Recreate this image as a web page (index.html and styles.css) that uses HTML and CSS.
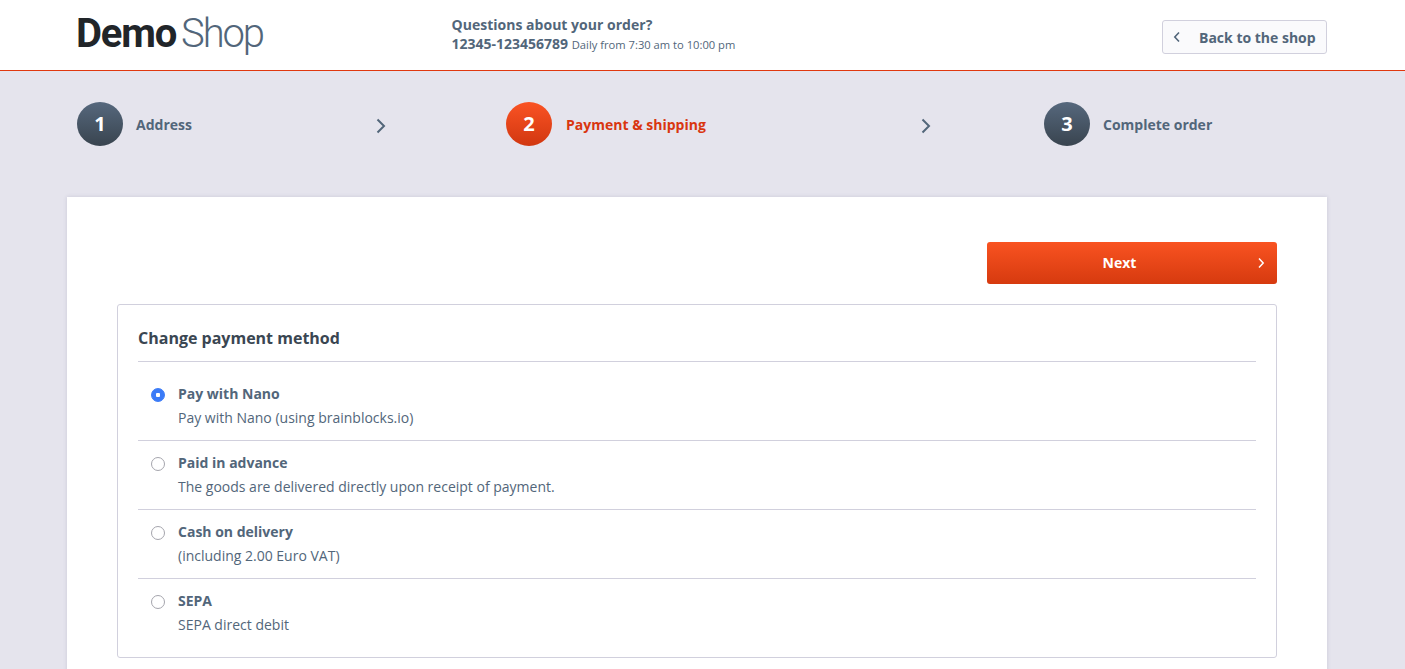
FILE: index.html
```html
<!DOCTYPE html>
<html lang="en">
<head>
  <meta charset="UTF-8">
  <meta name="viewport" content="width=device-width, initial-scale=1.0">
  <title>Demo Shop - Checkout</title>
  <link rel="stylesheet" href="styles.css">
</head>
<body>
  <header class="header">
    <div class="logo"><span class="logo-demo">Demo</span><span class="logo-shop">Shop</span></div>
    <div class="support">
      <div class="support-title">Questions about your order?</div>
      <div class="support-phone">12345-123456789 <span class="support-hours">Daily from 7:30 am to 10:00 pm</span></div>
    </div>
    <a class="back-button" href="#">
      <svg class="back-icon" width="8" height="12" viewBox="0 0 8 12"><path d="M6 1.500 1.800 6 6 10.500" fill="none" stroke="#52667a" stroke-width="1.600"/></svg>
      Back to the shop
    </a>
  </header>

  <nav class="steps">
    <div class="step step-first">
      <span class="step-number">1</span>
      <span class="step-label">Address</span>
      <svg class="step-arrow" width="10" height="16" viewBox="0 0 10 16"><path d="M1.500 1.500 8 8l-6.500 6.500" fill="none" stroke="#52667a" stroke-width="2"/></svg>
    </div>
    <div class="step step-second is-active">
      <span class="step-number">2</span>
      <span class="step-label">Payment &amp; shipping</span>
      <svg class="step-arrow" width="10" height="16" viewBox="0 0 10 16"><path d="M1.500 1.500 8 8l-6.500 6.500" fill="none" stroke="#52667a" stroke-width="2"/></svg>
    </div>
    <div class="step">
      <span class="step-number">3</span>
      <span class="step-label">Complete order</span>
    </div>
  </nav>

  <main class="card">
    <div class="actions">
      <button class="next-button" type="button">
        Next
        <svg class="next-icon" width="8" height="12" viewBox="0 0 8 12"><path d="M2 1.500 6.200 6 2 10.500" fill="none" stroke="#fff" stroke-width="1.500"/></svg>
      </button>
    </div>

    <section class="panel">
      <h2 class="panel-title">Change payment method</h2>
      <ul class="methods">
        <li class="method">
          <span class="radio is-checked"></span>
          <div>
            <div class="method-name">Pay with Nano</div>
            <div class="method-text">Pay with Nano (using brainblocks.io)</div>
          </div>
        </li>
        <li class="method">
          <span class="radio"></span>
          <div>
            <div class="method-name">Paid in advance</div>
            <div class="method-text">The goods are delivered directly upon receipt of payment.</div>
          </div>
        </li>
        <li class="method">
          <span class="radio"></span>
          <div>
            <div class="method-name">Cash on delivery</div>
            <div class="method-text">(including 2.00 Euro VAT)</div>
          </div>
        </li>
        <li class="method">
          <span class="radio"></span>
          <div>
            <div class="method-name">SEPA</div>
            <div class="method-text">SEPA direct debit</div>
          </div>
        </li>
      </ul>
    </section>
  </main>
</body>
</html>
```

FILE: styles.css
```css
html, body {
  height: 100%;
  overflow: hidden;
}
body {
  margin: 0;
  font-family: "Open Sans", sans-serif;
  font-size: 14px;
  color: #52667a;
  background-color: #e5e4ed;
}

/* header */
.header {
  display: flex;
  align-items: center;
  height: 70px;
  padding: 0 78px 0 76px;
  background-color: #fff;
  border-bottom: 1px solid #e0380f;
}
.logo {
  display: flex;
  width: 375.500px;
  margin-top: -3px;
  font-family: "Roboto", sans-serif;
  font-size: 40px;
  line-height: 44px;
}
.logo-demo {
  font-weight: 700;
  letter-spacing: -1.200px;
  color: #212529;
}
.logo-shop {
  margin-left: 5px;
  font-weight: 300;
  letter-spacing: -2.100px;
  color: #52667a;
}
.support {
  margin-top: -2px;
  line-height: 19px;
  font-weight: 700;
}
.support-title {
  letter-spacing: 0.020px;
}
.support-hours {
  font-size: 11.200px;
  font-weight: 400;
}
.back-button {
  display: flex;
  align-items: center;
  box-sizing: border-box;
  width: 165px;
  height: 34px;
  margin: 4px 0 0 auto;
  padding: 0 10px;
  font-weight: 700;
  white-space: nowrap;
  color: #52667a;
  text-decoration: none;
  background-color: #fafafc;
  border: 1px solid #d1d0dd;
  border-radius: 3px;
}
.back-icon {
  margin-right: 18px;
}

/* steps */
.steps {
  display: flex;
  padding: 31px 0 0 77px;
  height: 95px;
}
.step {
  display: flex;
  align-items: flex-start;
}
.step-first {
  width: 429px;
}
.step-second {
  width: 538px;
}
.step-number {
  width: 46px;
  height: 44px;
  margin-right: 13px;
  font-size: 20px;
  font-weight: 700;
  line-height: 43px;
  text-align: center;
  color: #fff;
  background: linear-gradient(#56687d, #39444f);
  border-radius: 50%;
}
.step-label {
  font-weight: 700;
  line-height: 45px;
}
.step-arrow {
  margin-top: 16px;
}
.step-first .step-arrow {
  margin-left: 184px;
}
.step-second .step-arrow {
  margin-left: 215px;
}
.is-active .step-number {
  margin-right: 14px;
  background: linear-gradient(#fa5324, #d13710);
}
.is-active .step-label {
  color: #d9360f;
}

/* card */
.card {
  width: 1160px;
  min-height: 500px;
  margin-left: 67px;
  padding: 45px 50px;
  background-color: #fff;
  box-shadow: 0 0 4px rgba(90, 90, 130, 0.2);
}
.actions {
  display: flex;
  justify-content: flex-end;
  margin-bottom: 20px;
}
.next-button {
  position: relative;
  width: 290px;
  height: 42px;
  padding: 0 25px 2px 0;
  font-family: inherit;
  font-size: 14px;
  font-weight: 700;
  color: #fff;
  background: linear-gradient(#f95321, #d63a0f);
  border: none;
  border-radius: 3px;
}
.next-icon {
  position: absolute;
  top: 15px;
  right: 12px;
}

/* payment methods */
.panel {
  box-sizing: border-box;
  height: 354px;
  padding: 0 20px;
  border: 1px solid #d1d0dd;
  border-radius: 3px;
}
.panel-title {
  height: 57px;
  box-sizing: border-box;
  margin: 0;
  font-size: 16px;
  font-weight: 700;
  line-height: 66px;
  color: #3a4652;
  border-bottom: 1px solid #d1d0dd;
}
.methods {
  margin: 0;
  padding: 10px 0 0;
  list-style: none;
}
.method {
  display: flex;
  box-sizing: border-box;
  height: 69px;
  padding: 10px 0 0 13px;
  border-bottom: 1px solid #d1d0dd;
}
.method:last-child {
  border-bottom: none;
}
.radio {
  box-sizing: border-box;
  width: 14px;
  height: 14px;
  margin: 6px 13px 0 0;
  background-color: #fff;
  border: 1px solid #a5a5ad;
  border-radius: 50%;
}
.radio.is-checked {
  background: radial-gradient(circle, #fff 0 2px, #3b7bf7 2.500px);
  border-color: #3b7bf7;
}
.method-name {
  font-weight: 700;
  line-height: 24px;
}
.method-text {
  line-height: 24px;
}
```
